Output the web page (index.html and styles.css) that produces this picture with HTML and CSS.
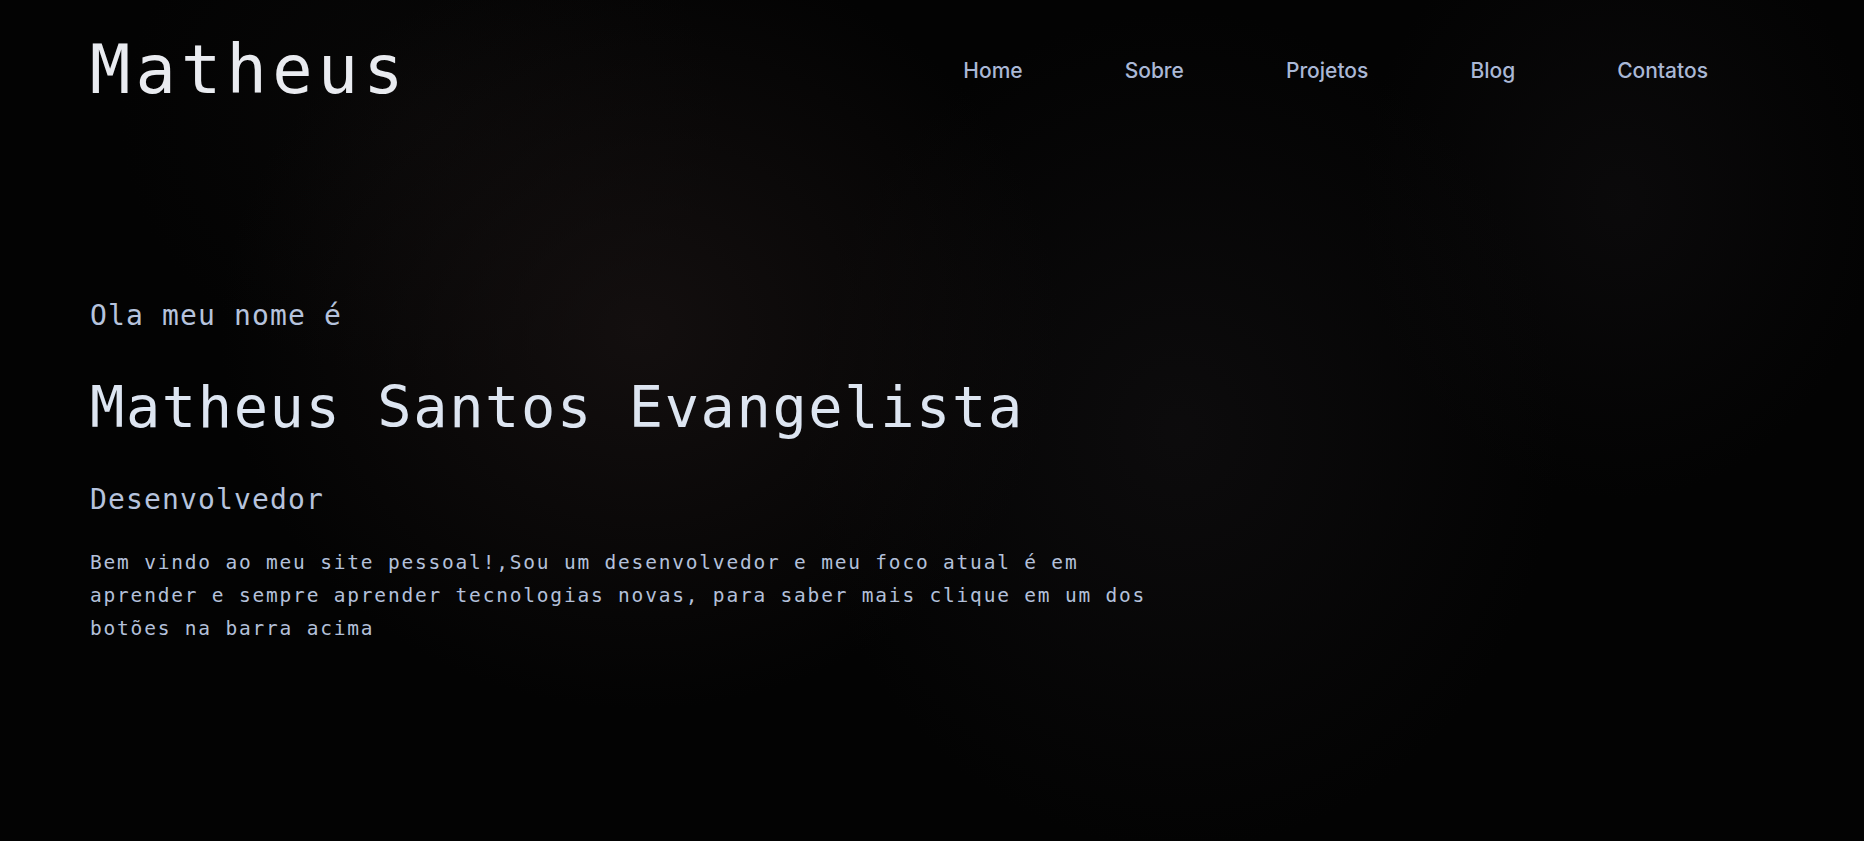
FILE: index.html
```html
<!DOCTYPE html>
<html lang="pt-BR">
<head>
<meta charset="utf-8">
<title>Matheus</title>
<link rel="stylesheet" href="styles.css">
</head>
<body>
<div class="page">
  <header class="header">
    <a class="logo" href="#">Matheus</a>
    <nav class="nav">
      <a href="#">Home</a>
      <a href="#">Sobre</a>
      <a href="#">Projetos</a>
      <a href="#">Blog</a>
      <a href="#">Contatos</a>
    </nav>
  </header>
  <main class="hero">
    <p class="hello">Ola meu nome é</p>
    <h1 class="name">Matheus Santos Evangelista</h1>
    <h2 class="role">Desenvolvedor</h2>
    <p class="intro">Bem vindo ao meu site pessoal!,Sou um desenvolvedor e meu foco atual é em aprender e sempre aprender tecnologias novas, para saber mais clique em um dos botões na barra acima</p>
  </main>
</div>
</body>
</html>
```

FILE: styles.css
```css
html, body {
  margin: 0;
  padding: 0;
}

body {
  background-color: #030303;
  font-family: "DejaVu Sans Mono", "Liberation Mono", monospace;
  min-height: 100vh;
}

.page {
  min-height: 841px;
  background:
    radial-gradient(ellipse 420px 380px at 640px 330px, rgba(26, 20, 20, 0.7), rgba(26, 20, 20, 0) 100%),
    radial-gradient(ellipse 380px 420px at 1180px 430px, rgba(20, 18, 20, 0.55), rgba(20, 18, 20, 0) 100%),
    radial-gradient(ellipse 260px 300px at 1620px 200px, rgba(18, 16, 18, 0.5), rgba(18, 16, 18, 0) 100%),
    radial-gradient(ellipse 300px 260px at 420px 120px, rgba(16, 14, 14, 0.4), rgba(16, 14, 14, 0) 100%),
    #030303;
}

.header {
  display: flex;
  align-items: center;
  justify-content: space-between;
  padding: 37px 156px 0 90px;
}

.logo {
  font-size: 67px;
  line-height: 67px;
  letter-spacing: 5.2px;
  color: #e9ebf0;
  text-decoration: none;
}

.nav {
  display: flex;
  gap: 102px;
}

.nav a {
  font-family: Inter, "Noto Sans", sans-serif;
  font-size: 21px;
  line-height: 21px;
  font-weight: 500;
  color: #aab8d6;
  text-decoration: none;
}

.hero {
  display: flex;
  flex-direction: column;
  align-items: flex-start;
  padding: 198px 90px 0 90px;
}

.hello {
  margin: 0;
  font-size: 28px;
  line-height: 28px;
  letter-spacing: 1.14px;
  font-weight: 400;
  color: #b6c3dd;
}

.name {
  margin: 49px 0 0 0;
  font-size: 57px;
  line-height: 57px;
  letter-spacing: 1.6px;
  font-weight: 400;
  color: #dde5f1;
}

.role {
  margin: 50px 0 0 0;
  font-size: 28px;
  line-height: 28px;
  letter-spacing: 1.14px;
  font-weight: 400;
  color: #b6c3dd;
}

.intro {
  margin: 32px 0 0 0;
  max-width: 1090px;
  font-size: 19.5px;
  line-height: 33px;
  letter-spacing: 1.8px;
  color: #b3c0da;
}
```
